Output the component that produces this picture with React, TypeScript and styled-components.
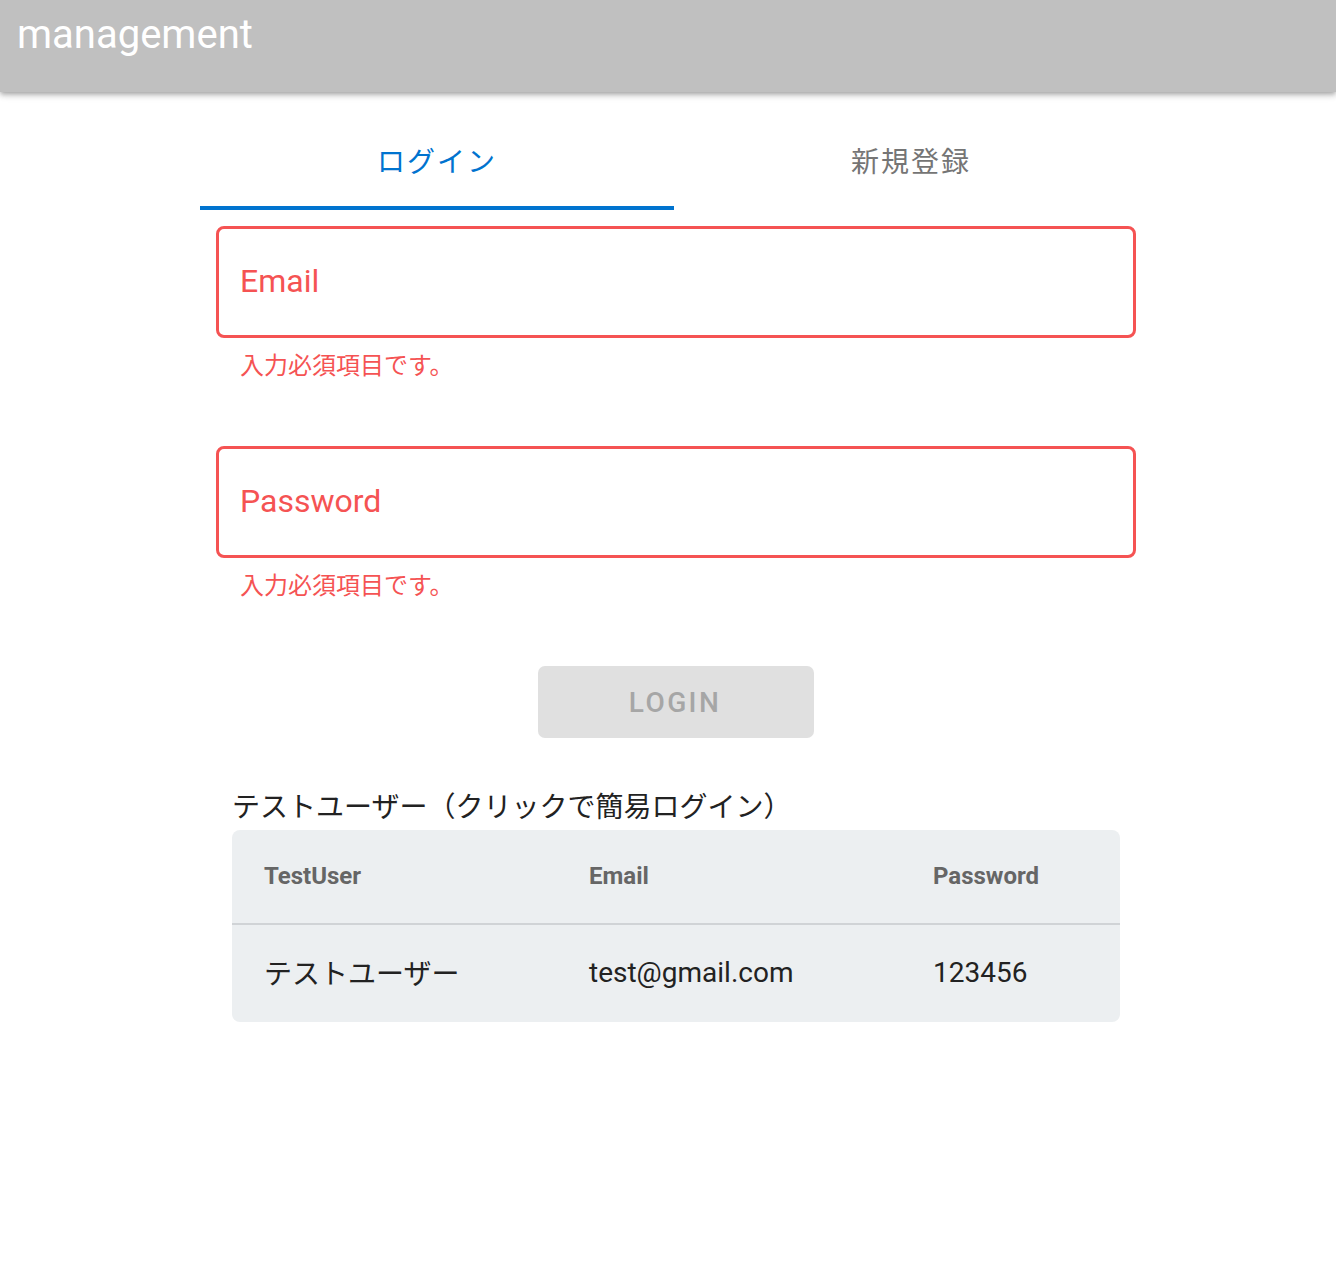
import React, { useState } from "react";
import styled, { createGlobalStyle } from "styled-components";

const Global = createGlobalStyle`
  html, body { margin: 0; padding: 0; background: #ffffff; }
  body { font-family: Roboto, "Noto Sans CJK JP", sans-serif; }
  * { box-sizing: border-box; }
`;

const Page = styled.div`
  min-height: 1284px;
  background: #ffffff;
`;

const AppBar = styled.header`
  height: 92px;
  background: #c0c0c0;
  box-shadow: 0 2px 4px -1px rgba(0,0,0,0.2), 0 4px 5px 0 rgba(0,0,0,0.14), 0 1px 10px 0 rgba(0,0,0,0.12);
  padding: 15px 0 0 17px;
`;

const Title = styled.h1`
  margin: 0;
  font-family: Roboto, sans-serif;
  font-weight: 400;
  font-size: 40px;
  line-height: 40px;
  color: #ffffff;
`;

const Main = styled.main`
  width: 948px;
  margin: 20px 0 0 200px;
`;

const TabList = styled.div`
  display: grid;
  grid-template-columns: 1fr 1fr;
`;

const Tab = styled.button<{ $active: boolean }>`
  height: 98px;
  border: none;
  background: transparent;
  cursor: pointer;
  font-family: Roboto, "Noto Sans CJK JP", sans-serif;
  font-size: 28px;
  font-weight: 400;
  letter-spacing: 2px;
  color: ${(p) => (p.$active ? "#0073cf" : "#757575")};
  border-bottom: 4px solid ${(p) => (p.$active ? "#0073cf" : "transparent")};
  padding: 2px 0 0;
`;

const Form = styled.form`
  width: 920px;
  margin: 16px 0 0 16px;
  display: flex;
  flex-direction: column;
`;

const FieldGroup = styled.div<{ $gap?: number }>`
  margin-top: ${(p) => p.$gap ?? 0}px;
`;

const FieldBox = styled.div`
  height: 112px;
  border: 3px solid #f55353;
  border-radius: 8px;
  display: flex;
  align-items: center;
  padding: 0 0 2px 21px;
`;

const FieldLabel = styled.span`
  font-family: Roboto, sans-serif;
  font-size: 32px;
  color: #f55353;
`;

const Helper = styled.p`
  margin: 11px 0 0 24px;
  font-family: Roboto, "Noto Sans CJK JP", sans-serif;
  font-size: 24px;
  line-height: 34px;
  color: #f55353;
`;

const ButtonRow = styled.div`
  display: flex;
  justify-content: center;
  margin-top: 63px;
`;

const LoginButton = styled.button`
  width: 276px;
  height: 72px;
  border: none;
  border-radius: 7px;
  background: #e0e0e0;
  color: #a6a6a6;
  font-family: Roboto, sans-serif;
  font-weight: 500;
  font-size: 28px;
  letter-spacing: 2.4px;
  text-transform: uppercase;
  padding: 0 2px 0 0;
`;

const TestSection = styled.section`
  margin: 52px 16px 0;
`;

const Caption = styled.div`
  font-family: Roboto, "Noto Sans CJK JP", sans-serif;
  font-size: 28px;
  line-height: 36px;
  color: #222222;
`;

const Table = styled.div`
  margin-top: 4px;
  background: #eceff1;
  border-radius: 8px;
  cursor: pointer;
`;

const Row = styled.div<{ $head?: boolean }>`
  display: grid;
  grid-template-columns: 325px 344px 1fr;
  align-items: center;
  height: ${(p) => (p.$head ? 95 : 97)}px;
  border-bottom: ${(p) => (p.$head ? "2px solid #d0d3d6" : "none")};
`;

const Cell = styled.div<{ $head?: boolean }>`
  padding: 0 0 ${(p) => (p.$head ? 2 : 3)}px 32px;
  font-family: Roboto, "Noto Sans CJK JP", sans-serif;
  font-size: ${(p) => (p.$head ? 24 : 28)}px;
  font-weight: ${(p) => (p.$head ? 700 : 400)};
  color: ${(p) => (p.$head ? "#666666" : "#222222")};
`;

export default function App() {
  const [tab, setTab] = useState(0);
  return (
    <Page>
      <Global />
      <AppBar>
        <Title>management</Title>
      </AppBar>
      <Main>
        <TabList>
          <Tab $active={tab === 0} onClick={() => setTab(0)}>ログイン</Tab>
          <Tab $active={tab === 1} onClick={() => setTab(1)}>新規登録</Tab>
        </TabList>
        <Form onSubmit={(e) => e.preventDefault()}>
          <FieldGroup>
            <FieldBox>
              <FieldLabel>Email</FieldLabel>
            </FieldBox>
            <Helper>入力必須項目です。</Helper>
          </FieldGroup>
          <FieldGroup $gap={63}>
            <FieldBox>
              <FieldLabel>Password</FieldLabel>
            </FieldBox>
            <Helper>入力必須項目です。</Helper>
          </FieldGroup>
          <ButtonRow>
            <LoginButton type="submit" disabled>Login</LoginButton>
          </ButtonRow>
          <TestSection>
            <Caption>テストユーザー（クリックで簡易ログイン）</Caption>
            <Table>
              <Row $head>
                <Cell $head>TestUser</Cell>
                <Cell $head>Email</Cell>
                <Cell $head>Password</Cell>
              </Row>
              <Row>
                <Cell>テストユーザー</Cell>
                <Cell>test@gmail.com</Cell>
                <Cell>123456</Cell>
              </Row>
            </Table>
          </TestSection>
        </Form>
      </Main>
    </Page>
  );
}
